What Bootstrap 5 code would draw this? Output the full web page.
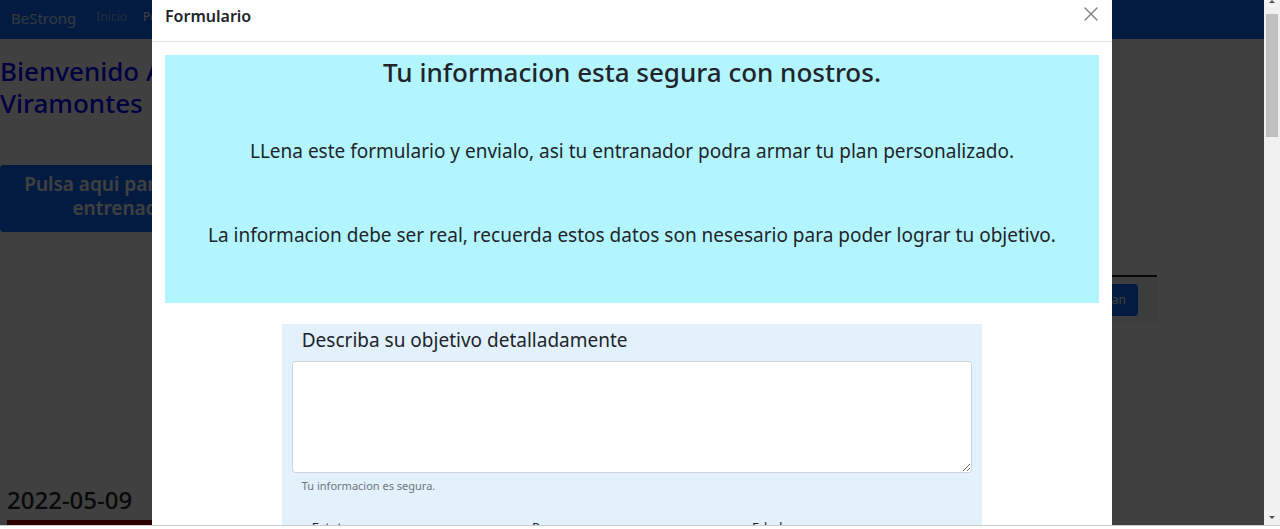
<!DOCTYPE html>
<html lang="es">
<head>
<meta charset="utf-8">
<meta name="viewport" content="width=device-width, initial-scale=1">
<title>BeStrong</title>
<link rel="stylesheet" href="https://cdn.jsdelivr.net/npm/bootstrap@5.3.0/dist/css/bootstrap.min.css">
<style>
body { font-family: "Noto Sans", "Open Sans", sans-serif; font-size: 13px; line-height: 20px; }
.viewport-area { min-height: 0; }
.top-nav { height: 39px; padding: 0 11px 4px; }
.top-nav .navbar-brand { font-size: 15px; line-height: 24px; padding: 0; margin: 0 20px 0 0; color: rgba(255,255,255,.8); }
.top-nav .nav-link { font-size: 12px; color: rgba(255,255,255,.5); padding: 0 0 2px; }
.top-nav .nav-link.active { color: #fff; }
.welcome { font-size: 26px; line-height: 32px; font-weight: 500; color: #00f; margin: 16px 0 46px; width: 240px; }
.btn-trainer { font-size: 19px; line-height: 24px; font-weight: 600; width: 250px; padding: 6px 10px 11px; border-radius: 3px; }
.plan-row { width: 957px; margin: 43px 0 0 200px; border-top: 2px solid #212529; background: #f2f2f2; padding: 7px 19px 7px 0; }
.plan-row .btn { font-size: 12px; padding: 5px 11px; line-height: 20px; border-radius: 3px; }
.day-title { font-size: 24px; line-height: 28px; font-weight: 500; margin: 163px 0 6px 7px; }
.day-bar { height: 32px; width: 80%; margin-left: 7px; background: #b30000; }
.shade { background: rgba(0,0,0,.75); }
.dialog-box { width: 960px; max-width: 100%; }
.dialog-head { padding: 3px 13px 12px; border-bottom: 1px solid #dee2e6; height: 42px; }
.dialog-head h1 { font-size: 16px; line-height: 26px; font-weight: 600; }
.dialog-head .btn-close { width: 14px; height: 14px; padding: 0; margin: 4px 1px 0 0; background: none; line-height: 0; }
.dialog-main { padding: 13px; }
.notice { background: #b3f5ff; height: 248px; padding-top: 1px; margin-bottom: 21px; }
.notice h2 { font-size: 26px; line-height: 32px; font-weight: 500; margin-bottom: 51px; }
.notice p { font-size: 19px; line-height: 24px; margin-bottom: 60px; }
.form-panel { background: #e2f1fc; width: 75%; padding: 4px 10px; }
.form-panel .form-label { font-size: 19px; line-height: 24px; margin: 0 0 9px 10px; }
.form-panel textarea.form-control { height: 112px; border-radius: 3px; border-color: #ced4da; }
.form-panel .form-text { font-size: 11px; line-height: 18px; margin: 4px 0 22px 10px; color: #6c757d; }
.field-row { padding-left: 20px; }
.field-row label { font-size: 13px; line-height: 20px; }
.side-scroll { width: 16px; background: #f1f1f1; }
.side-thumb { width: 12px; height: 123px; background: #c1c1c1; }
.bottom-edge { height: 4px; border-top: 1px solid #ccc; background: #fff; }
</style>
</head>
<body class="vh-100 overflow-hidden d-flex flex-column">
<div class="viewport-area d-flex flex-fill overflow-hidden">
  <div class="position-relative flex-fill overflow-hidden">
    <nav class="top-nav bg-primary d-flex align-items-center navbar-dark">
      <a class="navbar-brand" href="#">BeStrong</a>
      <div class="d-flex gap-3"><a class="nav-link" href="#">Inicio</a><a class="nav-link active" href="#">Pe</a></div>
    </nav>
    <h2 class="welcome">Bienvenido A Viramontes</h2>
    <button type="button" class="btn btn-primary btn-trainer">Pulsa aqui para ver tu entrenador</button>
    <div class="plan-row text-end"><button type="button" class="btn btn-primary">Ver plan</button></div>
    <h3 class="day-title">2022-05-09</h3>
    <div class="day-bar"></div>

    <div class="shade position-absolute top-0 start-0 w-100 h-100 overflow-hidden">
      <div class="dialog-box bg-white mx-auto h-100 overflow-hidden" role="dialog" aria-labelledby="formTitle">
        <div class="dialog-head d-flex justify-content-between align-items-start">
          <h1 id="formTitle" class="mb-0">Formulario</h1>
          <button type="button" class="btn-close" aria-label="Cerrar"><svg width="14" height="14" viewBox="0 0 14 14"><path d="M1 1L13 13M13 1L1 13" stroke="#000" stroke-width="1.4" stroke-linecap="round"/></svg></button>
        </div>
        <div class="dialog-main">
          <div class="notice text-center">
            <h2>Tu informacion esta segura con nostros.</h2>
            <p>LLena este formulario y envialo, asi tu entranador podra armar tu plan personalizado.</p>
            <p>La informacion debe ser real, recuerda estos datos son nesesario para poder lograr tu objetivo.</p>
          </div>
          <form class="form-panel mx-auto">
            <label class="form-label d-block" for="goal">Describa su objetivo detalladamente</label>
            <textarea class="form-control" id="goal"></textarea>
            <div class="form-text">Tu informacion es segura.</div>
            <div class="field-row row g-0">
              <div class="col-4"><label for="height">Estatura</label><input id="height" class="form-control"></div>
              <div class="col-4"><label for="weight">Peso</label><input id="weight" class="form-control"></div>
              <div class="col-4"><label for="age">Edad</label><input id="age" class="form-control"></div>
            </div>
          </form>
        </div>
      </div>
    </div>
  </div>
  <div class="side-scroll d-flex flex-column align-items-center flex-shrink-0" aria-hidden="true">
    <svg width="16" height="14" viewBox="0 0 16 14"><path d="M5 3L8 0L11 3Z" fill="#505050"/></svg>
    <div class="side-thumb"></div>
    <svg class="mt-auto" width="16" height="14" viewBox="0 0 16 14"><path d="M5 5h6L8 8Z" fill="#505050"/></svg>
  </div>
</div>
<div class="bottom-edge flex-shrink-0"></div>
<script src="https://cdn.jsdelivr.net/npm/bootstrap@5.3.0/dist/js/bootstrap.bundle.min.js"></script>
</body>
</html>
